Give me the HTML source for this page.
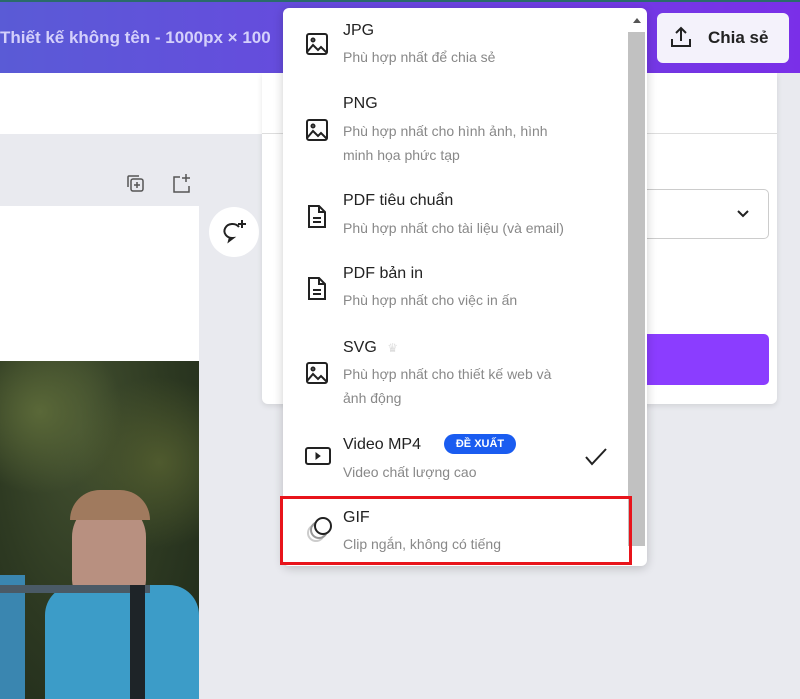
<!DOCTYPE html>
<html><head><meta charset="utf-8"><style>
*{margin:0;padding:0;box-sizing:border-box}
body{width:800px;height:699px;overflow:hidden;position:relative;background:#e9eaef;font-family:"Liberation Sans","Noto Sans CJK SC",sans-serif}
.abs{position:absolute}
.top{left:0;top:0;width:800px;height:73px;background:linear-gradient(90deg,#5a5bd6,#6a46e0 50%,#7a2fe8);border-top:2px solid #2a6b6b}
.title{left:0;top:28px;color:#d4d0fb;font-size:17px;font-weight:bold;white-space:nowrap}
.share{left:657px;top:13px;width:132px;height:50px;background:#f4f2fb;border-radius:6px;font-size:17px;font-weight:bold;color:#222}
.item{position:absolute;left:0;width:345px}
.item .t{position:absolute;left:60px;font-size:16px;color:#222}
.item .s{position:absolute;left:60px;font-size:14px;color:#888;line-height:24px}
.item svg{position:absolute;left:22px}
</style></head><body>
<div class="abs top"></div>
<div class="abs title">Thiết kế không tên - 1000px × 100</div>
<div class="abs share"><svg class="abs" style="left:12px;top:12px" width="24" height="24" viewBox="0 0 24 24" fill="none" stroke="#222" stroke-width="2"><path d="M12 16V3M7 8l5-5 5 5M3 14v7h18v-7"/></svg><span class="abs" style="left:51px;top:15px">Chia sẻ</span></div>
<div class="abs" style="left:0;top:73px;width:262px;height:61px;background:#fff"></div>
<div class="abs" style="left:0;top:206px;width:199px;height:155px;background:#fff"></div>
<div class="abs" style="left:0;top:361px;width:199px;height:338px;background:radial-gradient(circle at 20% 15%,#5a6838 0,transparent 25%),radial-gradient(circle at 80% 30%,#4f5a2e 0,transparent 30%),radial-gradient(ellipse at 40% 20%,#435030,#2e3a22 50%,#1f2a1a)"></div>
<div class="abs" style="left:72px;top:500px;width:74px;height:100px;border-radius:37px 37px 20px 20px;background:#b89080"></div>
<div class="abs" style="left:70px;top:490px;width:80px;height:30px;border-radius:40px 40px 0 0;background:#a07a5e"></div>
<div class="abs" style="left:45px;top:585px;width:154px;height:114px;background:#3c9cc8;border-radius:30px 30px 0 0"></div>
<div class="abs" style="left:0;top:575px;width:25px;height:124px;background:#3a86b0"></div>
<div class="abs" style="left:0;top:585px;width:150px;height:8px;background:#4a5a66"></div>
<div class="abs" style="left:130px;top:585px;width:15px;height:114px;background:#1e2428"></div>
<svg class="abs" style="left:124px;top:172px" width="24" height="24" viewBox="0 0 24 24" fill="none" stroke="#555" stroke-width="1.5"><rect x="7" y="7" width="12" height="12" rx="2"/><path d="M4 15V5a1 1 0 011-1h10M13 10v6M10 13h6"/></svg>
<svg class="abs" style="left:170px;top:172px" width="24" height="24" viewBox="0 0 24 24" fill="none" stroke="#555" stroke-width="1.5"><path d="M10 5H4v15h15v-6M16 2v8M12 6h8"/></svg>
<div class="abs" style="left:209px;top:207px;width:50px;height:50px;border-radius:50%;background:#fff"></div>
<svg class="abs" style="left:221px;top:219px" width="28" height="26" viewBox="0 0 28 26" fill="none" stroke="#222" stroke-width="2"><path d="M18 8a8 7 0 10-6 11l-4 3 1-4"/><path d="M21 1v8M17 5h8"/></svg>
<div class="abs" style="left:262px;top:73px;width:515px;height:331px;background:#fff;border-radius:0 0 6px 6px;box-shadow:0 2px 6px rgba(0,0,0,.1)"></div>
<div class="abs" style="left:262px;top:133px;width:515px;height:1px;background:#ddd"></div>
<div class="abs" style="left:600px;top:189px;width:169px;height:50px;border:1px solid #ccc;border-radius:5px"></div>
<svg class="abs" style="left:736px;top:209px" width="14" height="10" viewBox="0 0 14 10" fill="none" stroke="#222" stroke-width="2"><path d="M2 2l5 5 5-5"/></svg>
<div class="abs" style="left:600px;top:334px;width:169px;height:51px;background:#8b3dff;border-radius:5px"></div>
<div class="abs" style="left:283px;top:8px;width:364px;height:558px;background:#fff;border-radius:6px;box-shadow:0 2px 10px rgba(0,0,0,.2)">
<div class="abs" style="left:345px;top:24px;width:17px;height:514px;background:#c1c1c1"></div>
<div class="abs" style="left:350px;top:10px;width:0;height:0;border-left:4px solid transparent;border-right:4px solid transparent;border-bottom:5px solid #555"></div>
<div class="item" style="top:0">
<svg style="top:24px" width="24" height="24" viewBox="0 0 24 24" fill="none" stroke="#222" stroke-width="2"><rect x="2" y="2" width="20" height="20" rx="2"/><circle cx="8" cy="8" r="1.5"/><path d="M2 20l6-7 5 5 3-3 6 6"/></svg>
<div class="t" style="top:14px">JPG</div><div class="s" style="top:37px">Phù hợp nhất để chia sẻ</div></div>
<div class="item" style="top:0">
<svg style="top:110px" width="24" height="24" viewBox="0 0 24 24" fill="none" stroke="#222" stroke-width="2"><rect x="2" y="2" width="20" height="20" rx="2"/><circle cx="8" cy="8" r="1.5"/><path d="M2 20l6-7 5 5 3-3 6 6"/></svg>
<div class="t" style="top:87px">PNG</div><div class="s" style="top:111px">Phù hợp nhất cho hình ảnh, hình<br>minh họa phức tạp</div></div>
<div class="item" style="top:0">
<svg style="top:196px" width="24" height="26" viewBox="0 0 24 26" fill="none" stroke="#222" stroke-width="2"><path d="M4 2h10l6 6v15H4z M14 2v6h6M8 14h8M8 18h8"/></svg>
<div class="t" style="top:184px">PDF tiêu chuẩn</div><div class="s" style="top:208px">Phù hợp nhất cho tài liệu (và email)</div></div>
<div class="item" style="top:0">
<svg style="top:268px" width="24" height="26" viewBox="0 0 24 26" fill="none" stroke="#222" stroke-width="2"><path d="M4 2h10l6 6v15H4z M14 2v6h6M8 14h8M8 18h8"/></svg>
<div class="t" style="top:257px">PDF bản in</div><div class="s" style="top:280px">Phù hợp nhất cho việc in ấn</div></div>
<div class="item" style="top:0">
<svg style="top:353px" width="24" height="24" viewBox="0 0 24 24" fill="none" stroke="#222" stroke-width="2"><rect x="2" y="2" width="20" height="20" rx="2"/><circle cx="8" cy="8" r="1.5"/><path d="M2 20l6-7 5 5 3-3 6 6"/></svg>
<div class="t" style="top:331px">SVG <span style="color:#ddd;font-size:12px;margin-left:6px">♛</span></div><div class="s" style="top:354px">Phù hợp nhất cho thiết kế web và<br>ảnh động</div></div>
<div class="item" style="top:0">
<svg style="top:438px" width="26" height="20" viewBox="0 0 26 20" fill="none" stroke="#222" stroke-width="2"><rect x="1" y="2" width="24" height="16" rx="2"/><path d="M11 7v6l4-3z" fill="#222" stroke-width="1"/></svg>
<div class="t" style="top:428px">Video MP4</div>
<div class="abs" style="left:161px;top:426px;width:72px;height:20px;border-radius:10px;background:#1a5cf0;color:#fff;font-size:11px;font-weight:bold;text-align:center;line-height:20px">ĐỀ XUẤT</div>
<div class="s" style="top:452px">Video chất lượng cao</div>
<svg class="abs" style="left:301px;top:439px" width="24" height="20" viewBox="0 0 24 20" fill="none" stroke="#222" stroke-width="2"><path d="M2 10l6 7L22 2"/></svg></div>
<div class="item" style="top:0">
<svg style="top:506px" width="30" height="30" viewBox="0 0 30 30" fill="none" stroke-width="2"><circle cx="11" cy="19" r="8" stroke="#ccc"/><circle cx="14" cy="16" r="8" stroke="#999"/><circle cx="18" cy="12" r="8" stroke="#222" fill="#fff"/></svg>
<div class="t" style="top:501px">GIF</div><div class="s" style="top:524px">Clip ngắn, không có tiếng</div></div>
</div>
<div class="abs" style="left:280px;top:496px;width:352px;height:69px;border:3px solid #e8141b"></div>
</body></html>
